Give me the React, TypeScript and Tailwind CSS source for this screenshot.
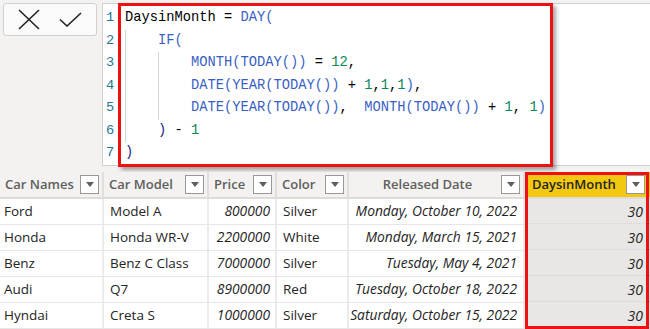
import React from "react";

const FN = "text-[#3a5fc4]";
const NUM = "text-[#098658]";
const PAR = "text-[#1b2580]";

const Guide = () => (
  <span className="inline-block w-[4ch] shadow-[inset_1px_0_0_#d4d4d4] whitespace-pre">{"    "}</span>
);

const codeLines: React.ReactNode[] = [
  <>
    <span>DaysinMonth = </span>
    <span className={FN}>DAY(</span>
  </>,
  <>
    <Guide />
    <span className={FN}>IF(</span>
  </>,
  <>
    <Guide />
    <Guide />
    <span className={FN}>MONTH(TODAY())</span>
    <span> = </span>
    <span className={NUM}>12</span>
    <span>,</span>
  </>,
  <>
    <Guide />
    <Guide />
    <span className={FN}>DATE(YEAR(TODAY())</span>
    <span> + </span>
    <span className={NUM}>1</span>,<span className={NUM}>1</span>,<span className={NUM}>1</span>
    <span className={FN}>)</span>,
  </>,
  <>
    <Guide />
    <Guide />
    <span className={FN}>DATE(YEAR(TODAY())</span>
    <span>,  </span>
    <span className={FN}>MONTH(TODAY())</span>
    <span> + </span>
    <span className={NUM}>1</span>
    <span>, </span>
    <span className={NUM}>1</span>
    <span className={FN}>)</span>
  </>,
  <>
    <Guide />
    <span className={PAR}>)</span>
    <span> - </span>
    <span className={NUM}>1</span>
  </>,
  <>
    <span className={PAR}>)</span>
  </>,
];

const cars = [
  ["Ford", "Model A", "800000", "Silver", "Monday, October 10, 2022"],
  ["Honda", "Honda WR-V", "2200000", "White", "Monday, March 15, 2021"],
  ["Benz", "Benz C Class", "7000000", "Silver", "Tuesday, May 4, 2021"],
  ["Audi", "Q7", "8900000", "Red", "Tuesday, October 18, 2022"],
  ["Hyndai", "Creta S", "1000000", "Silver", "Saturday, October 15, 2022"],
];

const FilterBtn = () => (
  <div className="w-[19px] h-[19px] shrink-0 bg-white border border-[#9a9896] flex items-center justify-center">
    <svg width="8" height="5" viewBox="0 0 8 5">
      <path d="M0 0 H8 L4 5 Z" fill="#605e5c" />
    </svg>
  </div>
);

const HeadCell = ({ label, center }: { label: string; center?: boolean }) => (
  <div className="h-full flex items-center pl-[5px] pr-[3px] border-r-2 border-[#e1dfdd]">
    <span className={`flex-1 truncate ${center ? "text-center" : ""}`}>{label}</span>
    <FilterBtn />
  </div>
);

export default function App() {
  return (
    <div className="w-[650px] h-[329px] overflow-hidden bg-[#f3f2f1] flex flex-col" style={{ fontFamily: "'Open Sans', 'Noto Sans', sans-serif" }}>
      {/* formula bar */}
      <div className="flex items-start pt-[3px] pl-[3px] h-[172px] shrink-0">
        <div className="w-[94px] h-[33px] bg-[#fafafa] border border-[#d2d0ce] rounded-[3px] flex items-center justify-center gap-[19px]">
          <svg width="22" height="21" viewBox="0 0 22 21">
            <path d="M1 1 L21 20 M21 1 L1 20" stroke="#252423" strokeWidth="1.6" fill="none" />
          </svg>
          <svg width="23" height="15" viewBox="0 0 23 15">
            <path d="M1 7.5 L8 14 L22 1" stroke="#252423" strokeWidth="1.6" fill="none" />
          </svg>
        </div>
        <div className="ml-[5px] flex-1 h-[163px] bg-white border-y border-l border-[#d2d0ce] flex">
          <div
            className="w-[15px] pl-[3px] text-[#237893] text-[13.7px] leading-[22.5px] pt-[3px]"
            style={{ fontFamily: "'Liberation Mono', monospace" }}
          >
            {codeLines.map((_, i) => (
              <div key={i}>{i + 1}</div>
            ))}
          </div>
          <div
            className="w-[435px] -mt-px h-[164px] border-[3px] border-[#ee1111] pl-[4px] pt-px text-black text-[13.75px] leading-[22.5px] whitespace-pre shadow-[3px_3px_4px_rgba(0,0,0,0.35)]"
            style={{ fontFamily: "'Liberation Mono', monospace" }}
          >
            {codeLines.map((l, i) => (
              <div key={i} className="h-[22.5px]">{l}</div>
            ))}
          </div>
        </div>
      </div>

      {/* table */}
      <div className="relative flex-1 text-[13.5px] whitespace-nowrap">
        <div className="grid grid-cols-[104px_105px_68px_72px_176px_125px] h-[27px] border-b-2 border-[#dedcda] font-semibold text-[13px] text-[#605e5c] bg-[#f3f2f1]">
          <HeadCell label="Car Names" />
          <HeadCell label="Car Model" />
          <HeadCell label="Price" />
          <HeadCell label="Color" />
          <HeadCell label="Released Date" center />
          <div className="h-full flex items-center pl-[7px] pr-[5px] bg-[#f2c811] text-[#252423]">
            <span className="flex-1">DaysinMonth</span>
            <FilterBtn />
          </div>
        </div>
        {cars.map((r, i) => (
          <div key={i} className="grid grid-cols-[104px_105px_68px_72px_176px_125px] h-[26px] bg-white text-[#252423] border-b border-[#e6e6e6]">
            <div className="pl-[4px] flex items-center border-r-2 border-[#ebebeb]">{r[0]}</div>
            <div className="pl-[6px] flex items-center border-r-2 border-[#ebebeb]">{r[1]}</div>
            <div className="pr-[5px] flex items-center justify-end italic text-[13.8px] border-r-2 border-[#ebebeb]">{r[2]}</div>
            <div className="pl-[6px] flex items-center border-r-2 border-[#ebebeb]">{r[3]}</div>
            <div className="pr-[6px] flex items-center justify-end italic text-[13.8px] border-r-2 border-[#ebebeb]">{r[4]}</div>
            <div className="pr-[7px] flex items-center justify-end italic text-[14px] bg-[#e9e7e5] border-b border-dotted border-[#d6d4d2]">30</div>
          </div>
        ))}
        <div className="absolute left-[525px] top-0 w-[124px] h-[157px] border-[3px] border-[#ee1111] pointer-events-none" />
      </div>
    </div>
  );
}
